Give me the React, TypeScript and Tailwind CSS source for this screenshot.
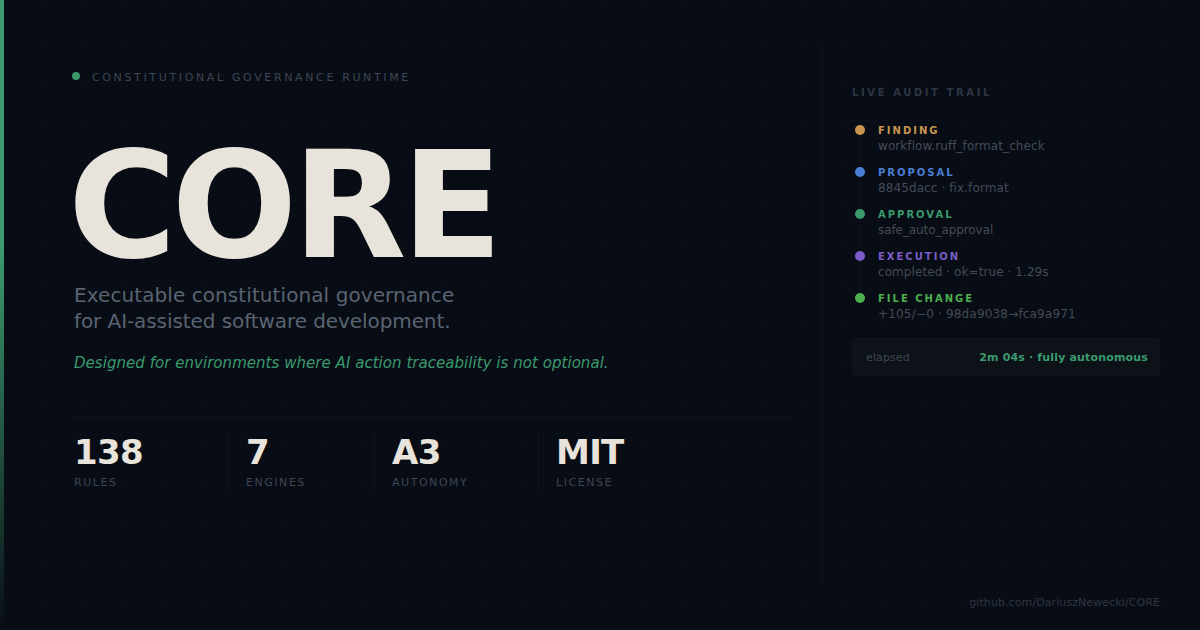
const events = [
  { label: "FINDING", detail: "workflow.ruff_format_check", dot: "bg-[#c8964e]", text: "text-[#c8964e]", line: true, x: "tracking-[0.08px]" },
  { label: "PROPOSAL", detail: "8845dacc · fix.format", dot: "bg-[#4a7fd4]", text: "text-[#4a7fd4]", line: true, x: "tracking-[0.1px]" },
  { label: "APPROVAL", detail: "safe_auto_approval", dot: "bg-[#3a9a6e]", text: "text-[#3a9a6e]", line: true, x: "tracking-[-0.08px]" },
  { label: "EXECUTION", detail: "completed · ok=true · 1.29s", dot: "bg-[#7c5cc8]", text: "text-[#7c5cc8]", line: true, x: "tracking-[0.08px]" },
  { label: "FILE CHANGE", detail: "+105/−0 · 98da9038→fca9a971", dot: "bg-[#4caf50]", text: "text-[#4caf50]", line: false, x: "tracking-[0.18px]" },
];

const stats = [
  { value: "138", label: "RULES", cls: "w-[156px]" },
  { value: "7", label: "ENGINES", cls: "w-[146px]" },
  { value: "A3", label: "AUTONOMY", cls: "w-[164px]" },
  { value: "MIT", label: "LICENSE", cls: "" },
];

export default function App() {
  return (
    <div className="relative flex h-[630px] w-[1200px] overflow-hidden bg-[#080c14] font-['DejaVu_Sans',sans-serif]">
      <div className="pointer-events-none absolute inset-0 bg-[linear-gradient(rgba(255,255,255,0.008)_1px,transparent_1px),linear-gradient(90deg,rgba(255,255,255,0.008)_1px,transparent_1px)] bg-[size:40px_40px]" />
      <div className="h-full w-1 shrink-0 bg-[linear-gradient(180deg,#3a9a6e_0%,#3a9a6e_40%,transparent_100%)]" />
      <main className="relative flex w-[818px] shrink-0 flex-col pl-[68px] pt-[69px]">
        <div className="flex h-3.5 items-center gap-3">
          <span className="h-2 w-2 rounded-full bg-[#3a9a6e]" />
          <span className="mt-1 text-[11px] tracking-[0.24em] text-[#3d4654]">CONSTITUTIONAL GOVERNANCE RUNTIME</span>
        </div>
        <h1 className="ml-[-4px] mt-[47px] text-[148px] font-bold leading-[152px] tracking-[-5px] text-[#e8e4dc]">CORE</h1>
        <div className="ml-0.5 text-[20px] leading-[26px] text-[#5a6472]">
          <p className="tracking-[0.08px]">Executable constitutional governance</p>
          <p className="tracking-[-0.08px]">for AI-assisted software development.</p>
        </div>
        <p className="ml-0.5 mt-[19px] text-[15px] italic leading-5 tracking-[0.04px] text-[#3a9a6e]">
          Designed for environments where AI action traceability is not optional.
        </p>
        <div className="mt-[44px] flex w-[720px] border-t border-[#0f141c] pt-[14px]">
          {stats.map((s, i) => (
            <div key={s.label} className={`${s.cls} h-[60px] ${i > 0 ? "border-l border-[#0f141c] pl-[17px]" : "pl-0.5"}`}>
              <div className="text-[34px] font-bold leading-10 tracking-[-0.02em] text-[#e8e4dc]">{s.value}</div>
              <div className="mt-[3px] text-[11px] leading-4 tracking-[0.14em] text-[#3d4654]">{s.label}</div>
            </div>
          ))}
        </div>
      </main>
      <aside className="relative mb-[46px] mt-[46px] flex flex-1 flex-col border-l border-[#0f141c] pl-[29px] pr-10 pt-[39px]">
        <div className="text-[10px] font-bold leading-4 tracking-[0.26em] text-[#2e3644]">LIVE AUDIT TRAIL</div>
        <div className="mt-[22px] flex flex-col">
          {events.map((e) => (
            <div key={e.label} className="flex h-[42px] gap-[13px] pl-[3px]">
              <div className="flex w-[10px] flex-col items-center pt-[2px]">
                <span className={`h-2.5 w-2.5 rounded-full ${e.dot}`} />
                {e.line && <span className="w-px flex-1 bg-[#0f141c]" />}
              </div>
              <div>
                <div className={`text-[10px] font-bold leading-4 tracking-[0.2em] ${e.text}`}>{e.label}</div>
                <div className={`mt-[-1px] text-xs leading-4 text-[#434b59] ${e.x}`}>{e.detail}</div>
              </div>
            </div>
          ))}
        </div>
        <div className="mt-[5px] flex h-[38px] items-center justify-between rounded border border-[#10151d] bg-[#0d1118] pl-[13px] pr-[11px] pt-0.5">
          <span className="text-[11px] tracking-[0.01em] text-[#3d4654]">elapsed</span>
          <span className="text-[11px] font-bold tracking-[0.015em] text-[#3a9a6e]">2m 04s · fully autonomous</span>
        </div>
      </aside>
      <div className="absolute bottom-[19px] right-10 text-[11px] leading-4 tracking-[0.008em] text-[#2e3644]">github.com/DariuszNewecki/CORE</div>
    </div>
  );
}
